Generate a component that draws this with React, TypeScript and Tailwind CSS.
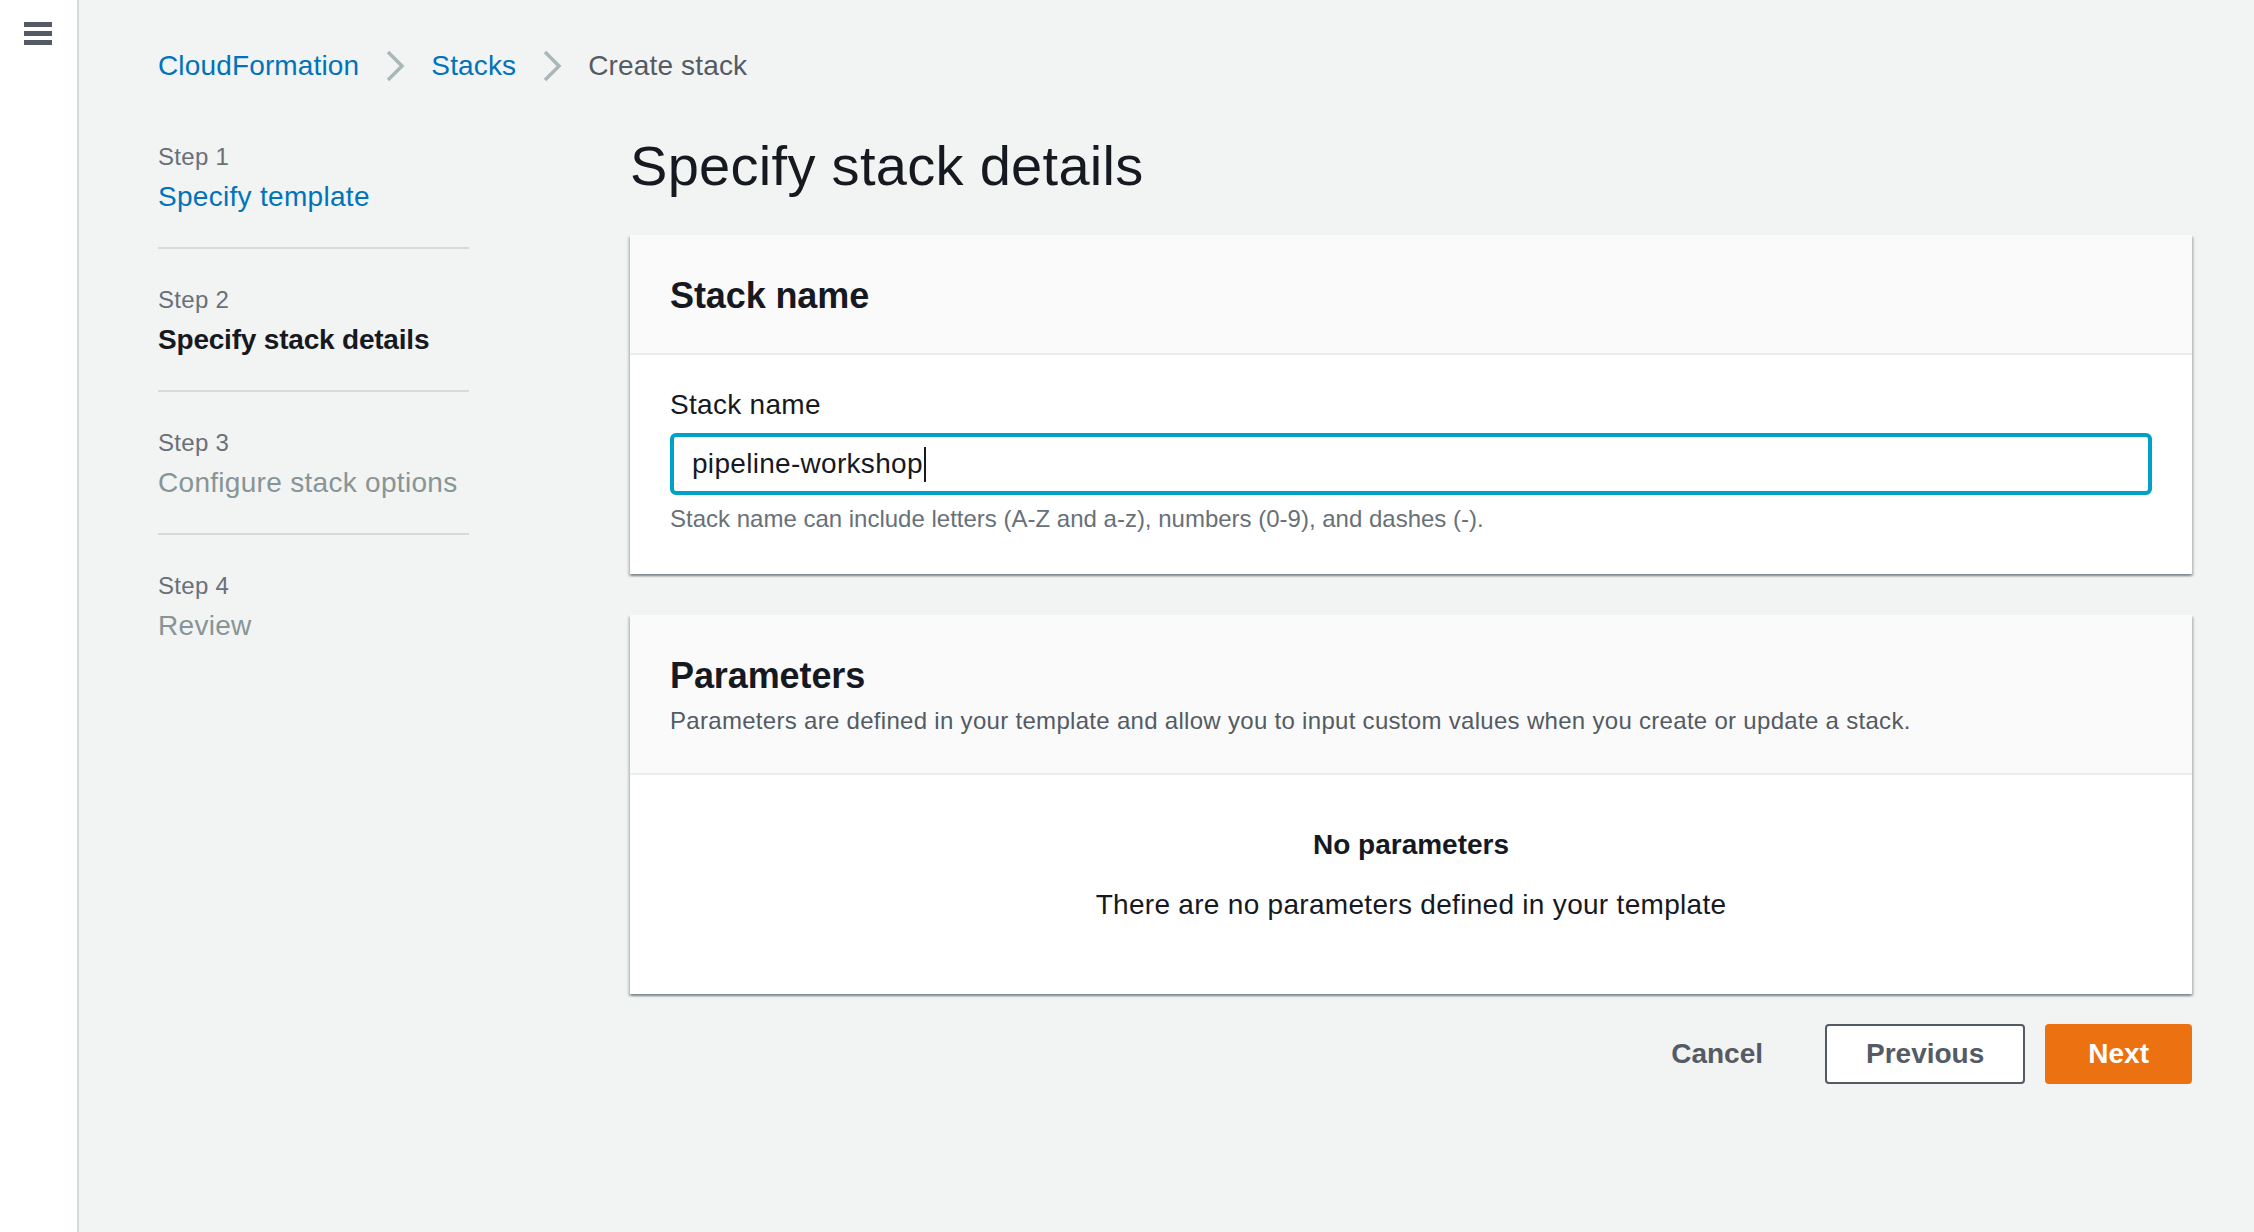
import React from "react";

const steps = [
  { label: "Step 1", title: "Specify template", state: "done" },
  { label: "Step 2", title: "Specify stack details", state: "current" },
  { label: "Step 3", title: "Configure stack options", state: "todo" },
  { label: "Step 4", title: "Review", state: "todo" },
];

function Chevron() {
  return (
    <svg width="20" height="30" viewBox="0 0 20 30" className="shrink-0">
      <polyline points="3,1 17,15 3,29" fill="none" stroke="#aab7b8" strokeWidth="3.5" />
    </svg>
  );
}

function Hamburger() {
  return (
    <div className="flex w-[28px] flex-col gap-[4px]">
      <div className="h-[5px] bg-[#545b64]" />
      <div className="h-[5px] bg-[#545b64]" />
      <div className="h-[5px] bg-[#545b64]" />
    </div>
  );
}

function StepNav() {
  return (
    <nav className="w-[311px] shrink-0 pt-[11px]">
      {steps.map((s, i) => (
        <div key={s.label}>
          <div className={i === 0 ? "" : "pt-[35px]"}>
            <div className="text-[24px] leading-[32px] text-[#687078]">{s.label}</div>
            <div
              className={
                s.state === "done"
                  ? "mt-[4px] text-[28px] leading-[40px] text-[#0073bb]"
                  : s.state === "current"
                  ? "mt-[4px] text-[28px] leading-[40px] font-bold tracking-[-0.2px] text-[#16191f]"
                  : "mt-[4px] text-[28px] leading-[40px] text-[#879596]"
              }
            >
              {s.title}
            </div>
          </div>
          {i < steps.length - 1 && <div className="mt-[30px] h-[2px] bg-[#d5dbdb]" />}
        </div>
      ))}
    </nav>
  );
}

const cardShadow =
  "shadow-[0_2px_2px_0_rgba(0,28,36,0.3),2px_2px_2px_0_rgba(0,28,36,0.15),-2px_2px_2px_0_rgba(0,28,36,0.15)]";

export default function App() {
  return (
    <div className="flex h-[1232px] w-full font-['Liberation_Sans',Arial,sans-serif] tracking-[0.3px] text-[#16191f]">
      <aside className="w-[79px] shrink-0 border-r-2 border-[#d5dbdb] bg-white pl-[24px] pt-[22px]">
        <Hamburger />
      </aside>

      <main className="flex-1 bg-[#f2f3f3] pl-[79px] pr-[62px] pt-[46px]">
        {/* breadcrumb */}
        <div className="flex h-[40px] items-center gap-[26px] text-[28px] leading-[40px] tracking-[0.15px]">
          <span className="text-[#0073bb]">CloudFormation</span>
          <Chevron />
          <span className="text-[#0073bb]">Stacks</span>
          <Chevron />
          <span className="text-[#545b64]">Create stack</span>
        </div>

        <div className="mt-[44px] flex">
          <StepNav />

          <div className="ml-[161px] flex-1">
            <h1 className="text-[56px] leading-[72px] font-normal text-[#16191f]">Specify stack details</h1>

            {/* Stack name card */}
            <section className={`mt-[33px] bg-white ${cardShadow}`}>
              <div className="border-b-2 border-[#eaeded] bg-[#fafafa] px-[40px] pb-[33px] pt-[37px]">
                <h2 className="text-[36px] font-bold leading-[48px] tracking-[-0.1px]">Stack name</h2>
              </div>
              <div className="px-[40px] pb-[39px] pt-[30px]">
                <div className="text-[28px] leading-[40px]">Stack name</div>
                <div className="mt-[8px] flex h-[62px] items-center rounded-[6px] border-[4px] border-[#00a1c9] pl-[18px] text-[28px]">
                  <span>pipeline-workshop</span>
                  <span className="ml-[1px] h-[35px] w-[2px] bg-[#16191f]" />
                </div>
                <div className="mt-[8px] text-[24px] leading-[32px] tracking-normal text-[#687078]">
                  Stack name can include letters (A-Z and a-z), numbers (0-9), and dashes (-).
                </div>
              </div>
            </section>

            {/* Parameters card */}
            <section className={`mt-[41px] bg-white ${cardShadow}`}>
              <div className="border-b-2 border-[#eaeded] bg-[#fafafa] px-[40px] pb-[36px] pt-[37px]">
                <h2 className="text-[36px] font-bold leading-[48px] tracking-[-0.1px]">Parameters</h2>
                <p className="mt-[5px] text-[24px] leading-[32px] text-[#545b64]">
                  Parameters are defined in your template and allow you to input custom values when you create or update a stack.
                </p>
              </div>
              <div className="pb-[69px] pt-[50px] text-center">
                <div className="text-[28px] font-bold leading-[40px] tracking-normal">No parameters</div>
                <div className="mt-[20px] text-[28px] leading-[40px]">There are no parameters defined in your template</div>
              </div>
            </section>

            <div className="mt-[30px] flex justify-end gap-[20px] tracking-normal">
              <button className="h-[60px] rounded-[4px] border-2 border-transparent px-[40px] text-[28px] font-bold text-[#545b64]">
                Cancel
              </button>
              <button className="h-[60px] rounded-[4px] border-2 border-[#545b64] bg-white px-[39px] text-[28px] font-bold text-[#545b64]">
                Previous
              </button>
              <button className="h-[60px] rounded-[4px] border-2 border-[#ec7211] bg-[#ec7211] px-[41px] text-[28px] font-bold text-white">
                Next
              </button>
            </div>
          </div>
        </div>
      </main>
    </div>
  );
}
